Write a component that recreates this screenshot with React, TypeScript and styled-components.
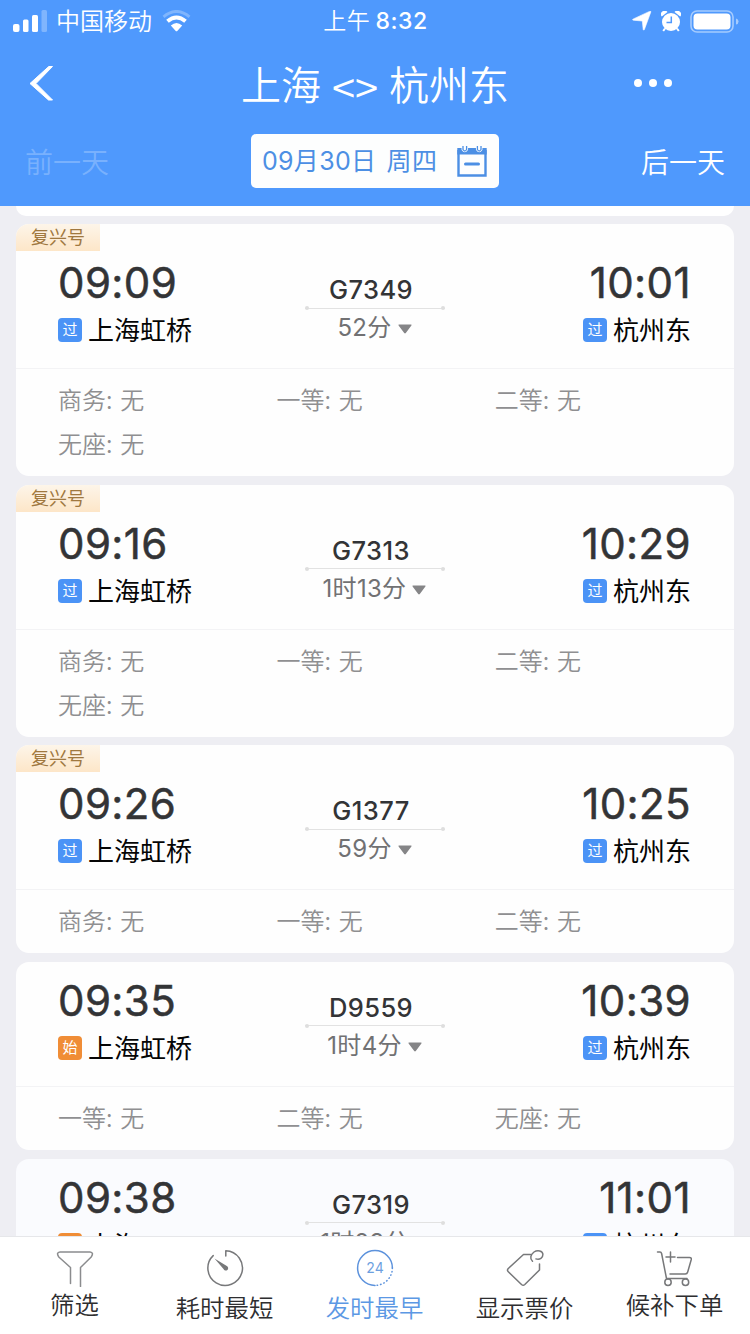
import React from 'react';
import styled, { createGlobalStyle } from 'styled-components';

const GlobalStyle = createGlobalStyle`
  * { box-sizing: border-box; }
  body {
    margin: 0;
    font-family: Inter, "Noto Sans CJK SC", sans-serif;
    -webkit-font-smoothing: antialiased;
  }
`;

const Screen = styled.div`
  width: 750px;
  height: 1334px;
  display: flex;
  flex-direction: column;
  overflow: hidden;
  background: #eeeef3;
  white-space: nowrap;
`;

const Header = styled.header`
  flex: none;
  height: 206px;
  background: #4f99fd;
  color: #fff;
`;

const StatusBar = styled.div`
  height: 40px;
  display: grid;
  grid-template-columns: 1fr auto 1fr;
  align-items: center;
  padding: 0 11px 0 13px;
`;

const Carrier = styled.div`
  display: flex;
  align-items: center;
  font-size: 24px;
  font-weight: 350;
  line-height: 40px;
  svg { display: block; }
  span { margin: 2px 10px 0 9px; }
`;

const Clock = styled.div`
  font-size: 23px;
  line-height: 40px;
  font-weight: 500;
  letter-spacing: 0.6px;
  padding-right: 1px;
  span { font-weight: 350; margin-right: 5px; }
`;

const StatusIcons = styled.div`
  display: flex;
  justify-content: flex-end;
  align-items: center;
  gap: 9px;
  svg { display: block; }
`;

const TitleBar = styled.div`
  height: 88px;
  display: grid;
  grid-template-columns: 120px 1fr 120px;
  align-items: center;
`;

const BackButton = styled.button`
  border: 0;
  padding: 0 0 2px 29px;
  background: none;
  height: 88px;
  svg { display: block; }
`;

const Title = styled.h1`
  margin: 0;
  padding-top: 4px;
  font-size: 40px;
  font-weight: 350;
  line-height: 84px;
  display: flex;
  justify-content: center;
`;

const Arrows = styled.span`
  font-family: "Noto Sans CJK SC", sans-serif;
  font-size: 42px;
  margin: 0 11px;
`;

const MoreButton = styled.button`
  border: 0;
  background: none;
  height: 88px;
  padding: 0 0 2px 4px;
  display: flex;
  align-items: center;
  gap: 7px;
`;

const Dot = styled.i`
  width: 8px;
  height: 8px;
  border-radius: 50%;
  background: #fff;
`;

const DayBar = styled.div`
  display: grid;
  grid-template-columns: 1fr auto 1fr;
  align-items: center;
  padding: 0 25px 0 25px;
  margin-top: 6px;
`;

const DayLink = styled.span<{ $dim?: boolean; $end?: boolean }>`
  font-size: 28px;
  font-weight: 350;
  line-height: 50px;
  padding-top: 4px;
  text-align: ${(p) => (p.$end ? 'right' : 'left')};
  color: ${(p) => (p.$dim ? '#79b1fd' : '#fff')};
`;

const DatePicker = styled.button`
  width: 248px;
  height: 54px;
  border: 0;
  border-radius: 5px;
  background: #fdfefe;
  color: #4c8fe4;
  font: 400 25px/54px Inter, "Noto Sans CJK SC", sans-serif;
  letter-spacing: 0.3px;
  word-spacing: 3px;
  display: flex;
  align-items: center;
  justify-content: space-between;
  padding: 0 11px 0 11px;
  svg { display: block; }
`;

const List = styled.main`
  flex: 1;
  min-height: 0;
  overflow: hidden;
  padding: 0 16px;
  display: flex;
  flex-direction: column;
  gap: 8.6px;
`;

const CardEnd = styled.div`
  flex: none;
  height: 9.6px;
  background: #fff;
  border-radius: 0 0 12px 12px;
`;

const Card = styled.article<{ $tinted?: boolean }>`
  flex: none;
  background: ${(p) => (p.$tinted ? '#fafbfe' : '#fefefe')};
  border-radius: 13px;
  overflow: hidden;
`;

const Tag = styled.div`
  width: 84px;
  height: 27px;
  padding-left: 15px;
  font-size: 18px;
  line-height: 27px;
  color: #a0783f;
  background: linear-gradient(#fdf5e9, #fde6c8);
`;

const Trip = styled.div<{ $tagged: boolean }>`
  height: ${(p) => (p.$tagged ? 118 : 125)}px;
  padding: ${(p) => (p.$tagged ? 7 : 14)}px 43px 0 42px;
  border-bottom: 1px solid #f3f3f5;
  display: grid;
  grid-template-columns: 1fr 140px 1fr;
`;

const Stop = styled.div<{ $end?: boolean }>`
  display: flex;
  flex-direction: column;
  align-items: ${(p) => (p.$end ? 'flex-end' : 'flex-start')};
`;

const Time = styled.div`
  font-size: 42px;
  line-height: 50px;
  font-weight: 400;
  letter-spacing: 0.4px;
  color: #333436;
  -webkit-text-stroke: 0.5px #333436;
`;

const Station = styled.div`
  display: flex;
  align-items: center;
  height: 44px;
  gap: 6px;
  font-size: 26px;
  line-height: 44px;
  color: #050505;
`;

const StationName = styled.span`
  padding-top: 2px;
`;

const StopBadge = styled.span<{ $origin: boolean }>`
  width: 24px;
  height: 24px;
  border-radius: 4px;
  background: ${(p) => (p.$origin ? '#f08d36' : '#4b93f6')};
  color: #fff;
  font-size: 15px;
  line-height: 24px;
  text-align: center;
`;

const Middle = styled.div`
  display: flex;
  flex-direction: column;
  align-items: center;
  padding-top: 15px;
`;

const TrainNo = styled.div`
  font-size: 25.5px;
  line-height: 34px;
  font-weight: 500;
  letter-spacing: 0.4px;
  color: #333436;
  padding-right: 7px;
`;

const Rule = styled.div`
  width: 140px;
  height: 4px;
  background: linear-gradient(#e2e2e2, #e2e2e2) center / 100% 1px no-repeat;
  margin: -1px 0;
  display: flex;
  justify-content: space-between;
  align-items: center;
  &::before, &::after {
    content: "";
    width: 4px;
    height: 4px;
    border-radius: 50%;
    background: #dedede;
  }
`;

const Duration = styled.div`
  display: flex;
  align-items: center;
  gap: 6px;
  font-size: 24px;
  line-height: 38px;
  font-weight: 400;
  letter-spacing: 0.3px;
  color: #717173;
  svg { display: block; margin-top: 2px; }
`;

const Seats = styled.div`
  padding: 8px 0 11px 42px;
  display: grid;
  grid-template-columns: repeat(3, 218.4px);
  grid-auto-rows: 44px;
`;

const Seat = styled.span`
  font-family: "Noto Sans CJK SC", sans-serif;
  font-size: 24px;
  line-height: 44px;
  font-weight: 350;
  color: #8f8f91;
  word-spacing: 2.5px;
`;

const TabBar = styled.nav`
  flex: none;
  height: 98px;
  background: #fff;
  border-top: 1px solid #e6e7ea;
  display: grid;
  grid-template-columns: repeat(5, 150px);
`;

const Tab = styled.button<{ $active?: boolean; $raised?: boolean }>`
  border: 0;
  background: none;
  padding: 12px 1px 0 0;
  display: flex;
  flex-direction: column;
  align-items: center;
  font: 350 24.4px/36px "Noto Sans CJK SC", sans-serif;
  color: ${(p) => (p.$active ? '#5c98e4' : '#2e2e30')};
  svg { display: block; margin-bottom: ${(p) => (p.$raised ? -1 : 2)}px; }
`;

type TrainProps = {
  fuxing?: boolean;
  tinted?: boolean;
  depart: string;
  arrive: string;
  no: string;
  time: string;
  from?: string;
  origin?: boolean;
  seats: string[];
};

const trains: TrainProps[] = [
  { fuxing: true, depart: '09:09', arrive: '10:01', no: 'G7349', time: '52分', seats: ['商务', '一等', '二等', '无座'] },
  { fuxing: true, depart: '09:16', arrive: '10:29', no: 'G7313', time: '1时13分', seats: ['商务', '一等', '二等', '无座'] },
  { fuxing: true, depart: '09:26', arrive: '10:25', no: 'G1377', time: '59分', seats: ['商务', '一等', '二等'] },
  { depart: '09:35', arrive: '10:39', no: 'D9559', time: '1时4分', origin: true, seats: ['一等', '二等', '无座'] },
  { tinted: true, depart: '09:38', arrive: '11:01', no: 'G7319', time: '1时23分', from: '上海', origin: true, seats: [] },
];

function TrainCard({ fuxing = false, tinted, depart, arrive, no, time, from = '上海虹桥', origin = false, seats }: TrainProps) {
  return (
    <Card $tinted={tinted}>
      {fuxing && <Tag>复兴号</Tag>}
      <Trip $tagged={fuxing}>
        <Stop>
          <Time>{depart}</Time>
          <Station><StopBadge $origin={origin}>{origin ? '始' : '过'}</StopBadge><StationName>{from}</StationName></Station>
        </Stop>
        <Middle>
          <TrainNo>{no}</TrainNo>
          <Rule />
          <Duration>
            {time}
            <svg width="14" height="10" viewBox="0 0 14 10"><path d="M1 .5h12q1 .2.4 1L7.8 9q-.8.8-1.6 0L.6 1.500Q0 .7 1 .5z" fill="#858587" /></svg>
          </Duration>
        </Middle>
        <Stop $end>
          <Time>{arrive}</Time>
          <Station><StopBadge $origin={false}>过</StopBadge><StationName>杭州东</StationName></Station>
        </Stop>
      </Trip>
      <Seats>{seats.map((s) => <Seat key={s}>{s}: 无</Seat>)}</Seats>
    </Card>
  );
}

const line = { fill: 'none', stroke: '#77787a', strokeWidth: 1.5, strokeLinecap: 'round', strokeLinejoin: 'round' } as const;

const FunnelIcon = () => (
  <svg width="38" height="38" viewBox="0 0 38 38" {...line} stroke="#8b8c8e">
    <path d="M14.500 34.500V18.500L2.800 8Q-.2 3.500 4 3H34q4.200.5 1.200 5L24.500 18.500V37.500" />
  </svg>
);

const StopwatchIcon = () => (
  <svg width="38" height="38" viewBox="0 0 38 38" {...line}>
    <path d="M19.800 7V1.800A17.300 17.300 0 1 1 7.200 6.600" />
    <path d="M8.500 9.500 20.800 17a2.400 2.400 0 1 1-3.300 3z" fill="#77787a" stroke="none" />
  </svg>
);

const DayClockIcon = () => (
  <svg width="38" height="38" viewBox="0 0 38 38" {...line} stroke="#5c92dc">
    <path d="M36.400 19A17.400 17.400 0 1 0 19 36.400" />
    <path d="M36.400 19A17.400 17.400 0 0 1 19 36.400" strokeDasharray="0.5 3" />
    <text x="19" y="24.300" textAnchor="middle" fontSize="14" fontWeight="400" fontFamily="Inter, sans-serif" fill="#6d9fdf" stroke="none">24</text>
  </svg>
);

const PriceTagIcon = () => (
  <svg width="38" height="38" viewBox="0 0 38 38" {...line}>
    <path d="M24.500 5.500H17.500L2.300 19.500q-1.600 1.700 0 3.300L15.500 35.500q1.700 1.500 3.300 0L33.500 21V15" />
    <path d="M26.500 12.300C23.500 9.500 24.600 5.500 28 3c3.500-2.400 8.800-1.300 8.900 2.300.1 3.500-3 5.800-7 4.600" />
  </svg>
);

const CartIcon = () => (
  <svg width="38" height="38" viewBox="0 0 38 38" {...line}>
    <path d="M1.500 3H4q1.200 0 1.600 1.500L10.500 29.500H31M21.500 8.500H33.500q2.200 0 1.700 2.200L31.700 23q-.5 2-2.500 2H14M14.500 3V13M10 8H19" />
    <circle cx="12" cy="33.200" r="3.200" />
    <circle cx="29.500" cy="33.200" r="3.200" />
  </svg>
);

export default function App() {
  return (
    <Screen>
      <GlobalStyle />
      <Header>
        <StatusBar>
          <Carrier>
            <svg width="34" height="22" viewBox="0 0 34 22" fill="#fff">
              <rect x="0" y="14" width="6.500" height="8" rx="2" />
              <rect x="10" y="9.500" width="5.500" height="12.500" rx="1.500" />
              <rect x="19" y="5" width="6" height="17" rx="1.500" />
              <rect x="28.500" y="0" width="5.500" height="22" rx="1.500" opacity=".28" />
            </svg>
            <span>中国移动</span>
            <svg width="29" height="22" viewBox="0 0 29 22" fill="none" stroke="#fff">
              <path d="M1.500 6.800Q14.500-3.800 27.500 6.800" strokeWidth="3" opacity=".28" />
              <path d="M5.500 11.300Q14.500 3.700 23.500 11.300" strokeWidth="4" />
              <path d="M8.800 15.500Q14.500 10.500 20.200 15.500L15.500 20.800q-1 1-2 0z" fill="#fff" stroke="none" />
            </svg>
          </Carrier>
          <Clock><span>上午</span>8:32</Clock>
          <StatusIcons>
            <svg width="20" height="20" viewBox="0 0 20 20"><path d="M18.800 1 12.400 18.500q-.7 1.300-1.200 0L10.300 10 1.400 9.200q-1.800-.5 0-1.300L17.500.4q1.800-.6 1.300.6z" fill="#fff" stroke="#fff" strokeWidth=".6" /></svg>
            <svg width="20" height="21" viewBox="0 0 20 21">
              <path d="M.8 5.500A3.500 3.500 0 0 1 6.500 1zM19.200 5.500A3.500 3.500 0 0 0 13.500 1z" fill="#fff" />
              <path d="M4 17.500 2.200 20M16 17.500l1.800 2.500" stroke="#fff" strokeWidth="2" />
              <circle cx="10" cy="11" r="9" fill="#fff" />
              <path d="M10.300 5.500V11.500H5.500" fill="none" stroke="#4f99fd" strokeWidth="1.500" />
            </svg>
            <svg width="49" height="23" viewBox="0 0 49 23">
              <rect x="1" y="1" width="42" height="21" rx="6" fill="none" stroke="#a5cbfe" strokeWidth="1.600" />
              <rect x="3.500" y="3.500" width="37" height="16" rx="4" fill="#fff" />
              <path d="M46 8.500q2.500.5 2.500 3t-2.500 3z" fill="#a5cbfe" />
            </svg>
          </StatusIcons>
        </StatusBar>
        <TitleBar>
          <BackButton aria-label="返回">
            <svg width="26" height="36" viewBox="0 0 26 36"><path d="M23.500 1.500H19.800L1 18.500 19.500 35H23.500L7 18.500z" fill="#fff" stroke="#fff" strokeWidth="1" /></svg>
          </BackButton>
          <Title>上海<Arrows>&lt;&gt;</Arrows>杭州东</Title>
          <MoreButton aria-label="更多"><Dot /><Dot /><Dot /></MoreButton>
        </TitleBar>
        <DayBar>
          <DayLink $dim>前一天</DayLink>
          <DatePicker>
            09月30日 周四
            <svg width="32" height="32" viewBox="0 0 32 32" fill="none" stroke="#4c8fe4">
              <path d="M2.500 5V30.500H29.500V5" strokeWidth="2.400" />
              <path d="M1.300 3H30.700V9.500H1.300z" fill="#4c8fe4" stroke="none" />
              <path d="M6.300 0V4.500q2.500 4 5 0V0M20.700 0V4.500q2.500 4 5 0V0" fill="#fdfefe" stroke="#fdfefe" strokeWidth="1.500" />
              <path d="M7 1V4.500q1.800 3 3.600 0V1M21.400 1V4.500q1.800 3 3.600 0V1" strokeWidth="1.300" />
              <path d="M9.500 19H22.500" strokeWidth="3" strokeLinecap="round" />
            </svg>
          </DatePicker>
          <DayLink $end>后一天</DayLink>
        </DayBar>
      </Header>
      <List>
        <CardEnd />
        {trains.map((t) => <TrainCard key={t.no} {...t} />)}
      </List>
      <TabBar>
        <Tab $raised><FunnelIcon />筛选</Tab>
        <Tab><StopwatchIcon />耗时最短</Tab>
        <Tab $active><DayClockIcon />发时最早</Tab>
        <Tab><PriceTagIcon />显示票价</Tab>
        <Tab $raised><CartIcon />候补下单</Tab>
      </TabBar>
    </Screen>
  );
}
